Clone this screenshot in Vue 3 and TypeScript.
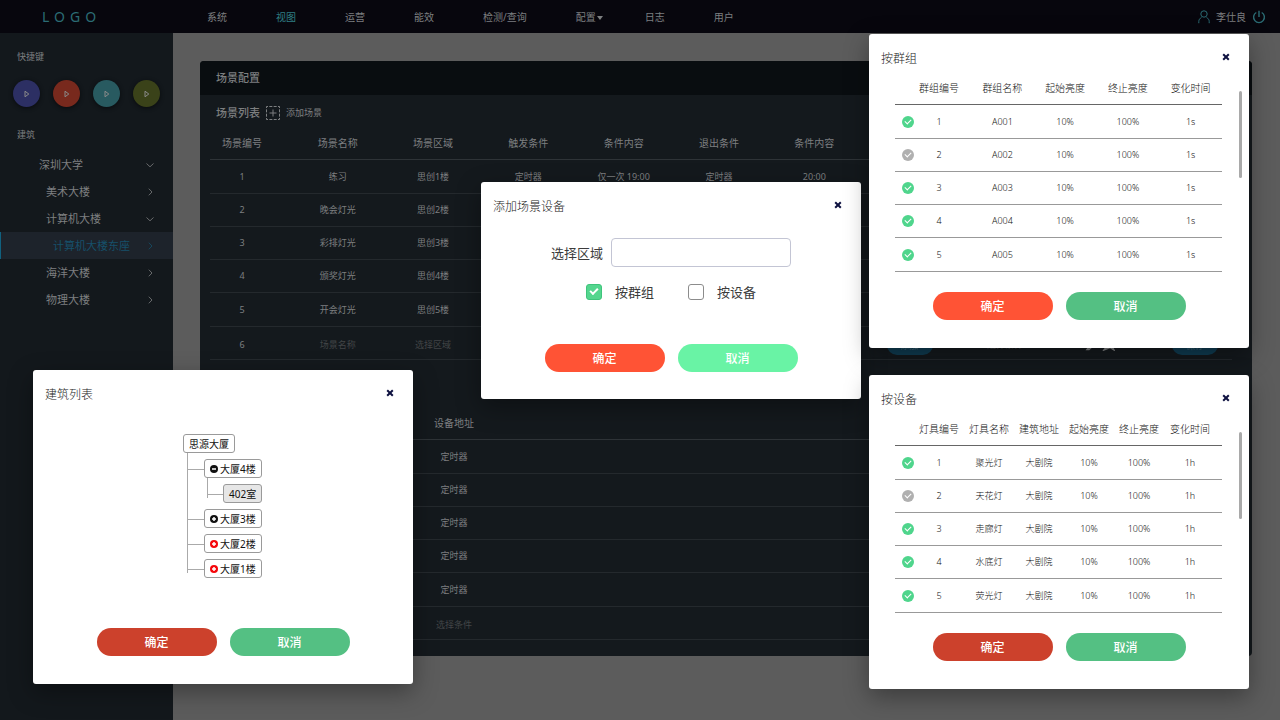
<script setup lang="ts">
import { ref } from 'vue'

interface NavItem { label: string; active?: boolean; menu?: boolean }
interface TreeItem { label: string; level: number; open?: boolean; active?: boolean }
interface CheckRow { on: boolean; cells: string[] }

const nav: NavItem[] = [
  { label: '系统' },
  { label: '视图', active: true },
  { label: '运营' },
  { label: '能效' },
  { label: '检测/查询' },
  { label: '配置', menu: true },
  { label: '日志' },
  { label: '用户' },
]

const shortcuts = ['violet', 'red', 'teal', 'olive']

const buildings: TreeItem[] = [
  { label: '深圳大学', level: 0, open: true },
  { label: '美术大楼', level: 1 },
  { label: '计算机大楼', level: 1, open: true },
  { label: '计算机大楼东座', level: 2, active: true },
  { label: '海洋大楼', level: 1 },
  { label: '物理大楼', level: 1 },
]

const sceneHead = ['场景编号', '场景名称', '场景区域', '触发条件', '条件内容', '退出条件', '条件内容']
const scenes: string[][] = [
  ['1', '练习', '思创1楼', '定时器', '仅一次 19:00', '定时器', '20:00'],
  ['2', '晚会灯光', '思创2楼', '', '', '', ''],
  ['3', '彩排灯光', '思创3楼', '', '', '', ''],
  ['4', '颁奖灯光', '思创4楼', '', '', '', ''],
  ['5', '开会灯光', '思创5楼', '', '', '', ''],
]

const devices = ['定时器', '定时器', '定时器', '定时器', '定时器']

const groupHead = ['群组编号', '群组名称', '起始亮度', '终止亮度', '变化时间']
const groups = ref<CheckRow[]>([
  { on: true, cells: ['1', 'A001', '10%', '100%', '1s'] },
  { on: false, cells: ['2', 'A002', '10%', '100%', '1s'] },
  { on: true, cells: ['3', 'A003', '10%', '100%', '1s'] },
  { on: true, cells: ['4', 'A004', '10%', '100%', '1s'] },
  { on: true, cells: ['5', 'A005', '10%', '100%', '1s'] },
])

const lampHead = ['灯具编号', '灯具名称', '建筑地址', '起始亮度', '终止亮度', '变化时间']
const lamps = ref<CheckRow[]>([
  { on: true, cells: ['1', '聚光灯', '大剧院', '10%', '100%', '1h'] },
  { on: false, cells: ['2', '天花灯', '大剧院', '10%', '100%', '1h'] },
  { on: true, cells: ['3', '走廊灯', '大剧院', '10%', '100%', '1h'] },
  { on: true, cells: ['4', '水底灯', '大剧院', '10%', '100%', '1h'] },
  { on: true, cells: ['5', '荧光灯', '大剧院', '10%', '100%', '1h'] },
])

const area = ref('')
const byGroup = ref(true)
const byDevice = ref(false)
</script>

<template>
  <div class="app">
    <header class="topbar">
      <a class="logo" href="#">LOGO</a>
      <nav class="nav">
        <a v-for="n in nav" :key="n.label" href="#" :class="{ active: n.active }">
          {{ n.label }}<svg v-if="n.menu" class="caret" viewBox="0 0 6 4" width="6" height="4"><path d="M0 0h6L3 4z" fill="currentColor" /></svg>
        </a>
      </nav>
      <div class="user">
        <svg class="teal-ico" viewBox="0 0 12 14" width="12" height="14" fill="none" stroke="currentColor">
          <circle cx="6" cy="4" r="3.2" />
          <path d="M.8 13.2V11.500c0-1.800.9-3 2.700-4.100M11.200 13.200v-1.700c0-1.800-.9-3-2.700-4.100" />
        </svg>
        <span>李仕良</span>
        <button class="plain teal-ico" type="button" aria-label="退出">
          <svg viewBox="0 0 14 14" width="14" height="14" fill="none" stroke="currentColor" stroke-width="1.400">
            <path d="M7 .8v6.200M4.300 2.500a5.400 5.400 0 1 0 5.400 0" />
          </svg>
        </button>
      </div>
    </header>

    <div class="body">
      <aside class="side">
        <h2 class="side-title">快捷键</h2>
        <div class="shortcuts">
          <button v-for="s in shortcuts" :key="s" type="button" :class="['round', s]" aria-label="执行">
            <svg viewBox="0 0 6 8" width="6" height="8" fill="none" stroke="currentColor"><path d="M1 1.200 4.800 4 1 6.800z" /></svg>
          </button>
        </div>
        <h2 class="side-title second">建筑</h2>
        <ul class="menu">
          <li v-for="b in buildings" :key="b.label">
            <a href="#" :class="['lv' + b.level, { active: b.active }]">
              <span>{{ b.label }}</span>
              <svg viewBox="0 0 8 8" width="8" height="8" fill="none" stroke="currentColor" stroke-width=".8">
                <path v-if="b.open" d="M.5 2.500 4 5.800 7.500 2.500" />
                <path v-else d="M2.800.7 6 4 2.800 7.300" />
              </svg>
            </a>
          </li>
        </ul>
      </aside>

      <main class="main">
        <section class="card">
          <h1 class="card-title">场景配置</h1>
          <div class="card-body">
            <div class="sub">
              <h2>场景列表</h2>
              <button class="plain add" type="button">
                <svg viewBox="0 0 14 14" width="14" height="14" fill="none" stroke="currentColor">
                  <rect x=".5" y=".5" width="13" height="13" stroke-dasharray="3 1.330" stroke-dashoffset="1.500" />
                  <path d="M7 3.500v7M3.500 7h7" />
                </svg>
                <span>添加场景</span>
              </button>
            </div>
            <table class="grid scenes">
              <colgroup>
                <col class="first" /><col v-for="i in 9" :key="i" /><col class="last" />
              </colgroup>
              <thead>
                <tr>
                  <th v-for="(h, i) in sceneHead" :key="i">{{ h }}</th>
                  <th></th><th></th><th></th><th></th>
                </tr>
              </thead>
              <tbody>
                <tr v-for="s in scenes" :key="s[0]">
                  <td v-for="(c, i) in s" :key="i">{{ c }}</td>
                  <td></td><td></td><td></td><td></td>
                </tr>
                <tr>
                  <td>6</td>
                  <td class="dim">场景名称</td>
                  <td class="dim">选择区域</td>
                  <td></td><td></td><td></td><td></td>
                  <td><button class="pill" type="button">添加</button></td>
                  <td class="dim">选择条件</td>
                  <td>
                    <svg class="tools" viewBox="0 0 30 12" width="30" height="12" fill="none" stroke="currentColor" stroke-width="1.400">
                      <path d="M2 10.500 9 2l2 2-7 6.500zM19 11l3-4-3-3.500h4L25 1l2 2.500h2L27 7l2 4-4-2.500z" />
                    </svg>
                  </td>
                  <td><button class="pill" type="button">保存</button></td>
                </tr>
              </tbody>
            </table>
            <table class="grid devices">
              <colgroup><col class="lead" /><col class="addr" /><col /></colgroup>
              <thead><tr><td></td><th>设备地址</th><td></td></tr></thead>
              <tbody>
                <tr v-for="(d, i) in devices" :key="i"><td></td><td>{{ d }}</td><td></td></tr>
                <tr><td></td><td class="dim">选择条件</td><td></td></tr>
              </tbody>
            </table>
          </div>
        </section>
      </main>
    </div>

    <section class="dialog d-list" role="dialog" aria-label="建筑列表">
      <header>
        <h2>建筑列表</h2>
        <button class="plain close" type="button" aria-label="关闭"><svg viewBox="0 0 8 8" width="8" height="8"><path d="M1.200 1.200l5.600 5.600M6.800 1.200 1.200 6.800" /></svg></button>
      </header>
      <div class="tree">
        <button class="node" type="button">思源大厦</button>
        <ul class="kids">
          <li>
            <button class="node" type="button">
              <svg viewBox="0 0 8 8" width="8" height="8"><circle cx="4" cy="4" r="4" /><path d="M2 4h4" class="mark" /></svg>大厦4楼
            </button>
            <ul class="kids inner">
              <li><button class="node chosen" type="button">402室</button></li>
            </ul>
          </li>
          <li><button class="node" type="button"><svg viewBox="0 0 8 8" width="8" height="8"><circle cx="4" cy="4" r="4" /><path d="M2 4h4M4 2v4" class="mark" /></svg>大厦3楼</button></li>
          <li><button class="node warn" type="button"><svg viewBox="0 0 8 8" width="8" height="8"><circle cx="4" cy="4" r="4" /><path d="M2 4h4M4 2v4" class="mark" /></svg>大厦2楼</button></li>
          <li><button class="node warn" type="button"><svg viewBox="0 0 8 8" width="8" height="8"><circle cx="4" cy="4" r="4" /><path d="M2 4h4M4 2v4" class="mark" /></svg>大厦1楼</button></li>
        </ul>
      </div>
      <footer>
        <button class="btn ok dark" type="button">确定</button>
        <button class="btn no" type="button">取消</button>
      </footer>
    </section>

    <section class="dialog d-add" role="dialog" aria-label="添加场景设备">
      <header>
        <h2>添加场景设备</h2>
        <button class="plain close" type="button" aria-label="关闭"><svg viewBox="0 0 8 8" width="8" height="8"><path d="M1.200 1.200l5.600 5.600M6.800 1.200 1.200 6.800" /></svg></button>
      </header>
      <div class="form">
        <div class="field">
          <label for="area">选择区域</label>
          <input id="area" v-model="area" type="text" />
        </div>
        <div class="choices">
          <label><input v-model="byGroup" class="box" type="checkbox" />按群组</label>
          <label><input v-model="byDevice" class="box" type="checkbox" />按设备</label>
        </div>
      </div>
      <footer>
        <button class="btn ok" type="button">确定</button>
        <button class="btn no light" type="button">取消</button>
      </footer>
    </section>

    <section class="dialog d-group" role="dialog" aria-label="按群组">
      <header>
        <h2>按群组</h2>
        <button class="plain close" type="button" aria-label="关闭"><svg viewBox="0 0 8 8" width="8" height="8"><path d="M1.200 1.200l5.600 5.600M6.800 1.200 1.200 6.800" /></svg></button>
      </header>
      <table class="list five">
        <colgroup><col class="tick" /><col class="num" /><col v-for="i in 4" :key="i" /></colgroup>
        <thead><tr><td></td><th v-for="h in groupHead" :key="h">{{ h }}</th></tr></thead>
        <tbody>
          <tr v-for="g in groups" :key="g.cells[0]">
            <td><input v-model="g.on" class="dot" type="checkbox" :aria-label="g.cells[1]" /></td>
            <td v-for="(c, i) in g.cells" :key="i">{{ c }}</td>
          </tr>
        </tbody>
      </table>
      <i class="thumb"></i>
      <footer>
        <button class="btn ok" type="button">确定</button>
        <button class="btn no" type="button">取消</button>
      </footer>
    </section>

    <section class="dialog d-lamp" role="dialog" aria-label="按设备">
      <header>
        <h2>按设备</h2>
        <button class="plain close" type="button" aria-label="关闭"><svg viewBox="0 0 8 8" width="8" height="8"><path d="M1.200 1.200l5.600 5.600M6.800 1.200 1.200 6.800" /></svg></button>
      </header>
      <table class="list six">
        <colgroup><col class="tick" /><col class="num" /><col v-for="i in 4" :key="i" class="mid" /><col /></colgroup>
        <thead><tr><td></td><th v-for="h in lampHead" :key="h">{{ h }}</th></tr></thead>
        <tbody>
          <tr v-for="l in lamps" :key="l.cells[0]">
            <td><input v-model="l.on" class="dot" type="checkbox" :aria-label="l.cells[1]" /></td>
            <td v-for="(c, i) in l.cells" :key="i">{{ c }}</td>
          </tr>
        </tbody>
      </table>
      <i class="thumb"></i>
      <footer>
        <button class="btn ok dark" type="button">确定</button>
        <button class="btn no" type="button">取消</button>
      </footer>
    </section>
  </div>
</template>

<style>
body {
  margin: 0;
  background: #5c5c5c;
}
</style>

<style scoped>
.app,
.app button,
.app input {
  font-family: "Noto Sans", "Noto Sans CJK SC", sans-serif;
}
.app {
  position: relative;
  display: flex;
  flex-direction: column;
  min-height: 100vh;
  overflow: hidden;
  font-size: 9px;
  line-height: 14px;
  color: #7d7f80;
}
.app *,
.app *::before,
.app *::after {
  box-sizing: border-box;
}
h1,
h2,
ul {
  margin: 0;
  padding: 0;
  list-style: none;
  font-weight: 400;
}
a {
  color: inherit;
  text-decoration: none;
}
svg {
  display: block;
  flex: none;
}
.plain {
  display: flex;
  align-items: center;
  padding: 0;
  border: 0;
  background: none;
  color: inherit;
  font-size: 9px;
  line-height: 14px;
}

.topbar {
  display: flex;
  align-items: center;
  height: 33px;
  padding-right: 14px;
  background: #07060d;
}
.logo {
  width: 165px;
  margin-left: 42px;
  font-size: 14px;
  letter-spacing: 5px;
  color: #2b6c74;
}
.nav {
  display: flex;
  gap: 49px;
  font-size: 10px;
}
.nav a {
  position: relative;
}
.nav .active {
  color: #2f7f83;
}
.caret {
  position: absolute;
  top: 6px;
  right: -7px;
}
.user {
  display: flex;
  align-items: center;
  gap: 6px;
  margin-left: auto;
}
.user span {
  font-size: 10px;
}
.user .teal-ico {
  color: #2b6c74;
}

.body {
  display: flex;
  flex: 1;
}
.side {
  width: 173px;
  padding-top: 17px;
  background: #13181c;
}
.side-title {
  padding-left: 17px;
  font-size: 9px;
}
.second {
  margin-top: 21px;
}
.shortcuts {
  display: flex;
  gap: 13px;
  padding: 16px 0 0 13px;
}
.round {
  display: grid;
  place-items: center;
  width: 27px;
  height: 27px;
  padding: 0;
  border: 0;
  border-radius: 50%;
  color: #8a8a8a;
  box-shadow: 0 1px 4px #090b0e;
}
.violet { background: #2c2f63; }
.red { background: #78291d; }
.teal { background: #285a60; }
.olive { background: #3a4219; }
.menu {
  margin-top: 9px;
  font-size: 11px;
}
.menu a {
  display: flex;
  align-items: center;
  justify-content: space-between;
  height: 27px;
  padding-right: 19px;
  border-left: 1px solid transparent;
}
.menu .lv0 { padding-left: 38px; }
.menu .lv1 { padding-left: 45px; }
.menu .lv2 { padding-left: 52px; }
.menu .active {
  border-left-color: #10617f;
  background: #1d232b;
  color: #16506a;
}

.main {
  flex: 1;
  padding: 28px 28px 64px 27px;
  background: #5c5c5c;
}
.card {
  border-radius: 4px;
  background: #14191d;
  overflow: hidden;
}
.card-title {
  height: 34px;
  padding-left: 16px;
  background: #090d10;
  font-size: 11px;
  font-weight: 500;
  line-height: 33px;
}
.card-body {
  padding: 0 20px 16px 10px;
}
.sub {
  display: flex;
  align-items: center;
  gap: 6px;
  height: 31px;
  padding: 5px 0 0 6px;
}
.sub h2 {
  font-size: 11px;
  font-weight: 500;
}
.add {
  gap: 6px;
}
table {
  border-collapse: separate;
  border-spacing: 0;
  table-layout: fixed;
}
th,
td {
  padding: 0;
  font-weight: 400;
  text-align: center;
  vertical-align: middle;
  white-space: nowrap;
}
th {
  font-size: 10px;
}
.grid {
  width: 100%;
}
.grid thead tr {
  height: 34px;
}
.grid tbody tr {
  height: 33px;
}
.grid tbody tr:nth-child(4n + 1) {
  height: 34px;
}
.grid th,
.grid td {
  border-bottom: 1px solid #24292d;
}
.grid thead th,
.grid thead td {
  border-bottom-color: #2e3337;
}
.grid tbody tr:last-child td {
  padding-top: 4px;
}
.first { width: 80px; }
.last { width: 84px; }
.scenes th:first-child,
.scenes td:first-child {
  padding-right: 16px;
}
.scenes td:last-child {
  padding-left: 10px;
}
.devices {
  margin-top: 46px;
}
.lead { width: 191px; }
.addr { width: 106px; }
.grid .dim {
  color: #424547;
}
.pill {
  width: 46px;
  height: 20px;
  padding: 0;
  border: 0;
  border-radius: 10px;
  background: #0f3c52;
  color: #3f6474;
  font-size: 9px;
}
.tools {
  margin: 0 auto;
}

.dialog {
  position: absolute;
  display: flex;
  flex-direction: column;
  width: 380px;
  border-radius: 3px;
  background: #fff;
  color: #222;
  box-shadow: 0 8px 24px rgba(0, 0, 0, 0.35);
}
.d-list { left: 33px; top: 370px; }
.d-add { left: 481px; top: 182px; }
.d-group { right: 31px; top: 34px; }
.d-lamp { right: 31px; top: 375px; }
.dialog header {
  display: flex;
  align-items: flex-start;
  justify-content: space-between;
  height: 38px;
  padding: 16px 19px 0 12px;
}
.dialog h2 {
  font-size: 12px;
  font-weight: 300;
  line-height: 18px;
}
.close {
  height: 14px;
}
.close path {
  stroke: #0e1140;
  stroke-width: 2;
}
.dialog footer {
  display: flex;
  justify-content: center;
  gap: 13px;
  padding: 20px 0 28px;
}
.btn {
  width: 120px;
  height: 28px;
  padding: 0;
  border: 0;
  border-radius: 14px;
  color: #fff;
  font-size: 12px;
  font-weight: 500;
}
.ok { background: #ff5335; }
.ok.dark { background: #cc412c; }
.no { background: #54c083; }
.no.light { background: #69f3a5; }

.list {
  width: 327px;
  margin: 0 auto 0 26px;
}
.list thead tr {
  height: 33px;
}
.list tbody tr {
  height: 33px;
}
.list tbody tr:nth-child(4n + 1) {
  height: 34px;
}
.list th,
.list td {
  border-bottom: 1px solid #999;
  color: #111;
  font-weight: 300;
}
.list thead th,
.list thead td {
  border-bottom-color: #666;
}
.tick { width: 24px; }
.five .num { width: 52px; }
.six .num { width: 45px; }
.six .mid { width: 50px; }
.five th:nth-child(2),
.five td:nth-child(2) {
  padding-right: 12px;
}
.six th:nth-child(2),
.six td:nth-child(2) {
  padding-right: 5px;
}
.six th:last-child,
.six td:last-child {
  padding-right: 6px;
}
.dot {
  position: relative;
  display: block;
  width: 12px;
  height: 12px;
  margin: 0 0 0 7px;
  appearance: none;
  border-radius: 50%;
  background: #b0b0b0;
}
.dot:checked {
  background: #4fd58c;
}
.dot::after {
  content: "";
  position: absolute;
  left: 3px;
  top: 3px;
  width: 6px;
  height: 4px;
  border: solid #fff;
  border-width: 0 0 1px 1px;
  transform: rotate(-45deg);
}
.thumb {
  position: absolute;
  right: 7px;
  top: 57px;
  width: 3px;
  height: 87px;
  border-radius: 2px;
  background: #a9a9a9;
}

.form {
  display: flex;
  flex-direction: column;
  align-items: center;
  gap: 17px;
  padding: 18px 0 24px;
  color: #3c3c3c;
  font-size: 13px;
}
.d-add footer {
  padding-bottom: 27px;
}
.field {
  display: flex;
  align-items: center;
  gap: 8px;
}
.field input {
  width: 180px;
  height: 29px;
  padding: 0 8px;
  border: 1px solid #c3c5d4;
  border-radius: 4px;
  outline: 0;
  font-size: 13px;
}
.choices {
  display: flex;
  gap: 34px;
}
.choices label {
  display: flex;
  align-items: center;
  gap: 13px;
  height: 16px;
}
.box {
  position: relative;
  width: 16px;
  height: 16px;
  margin: 0;
  appearance: none;
  border: 1px solid #8c8c8c;
  border-radius: 3px;
}
.box:checked {
  border-color: #3fc47c;
  background: #54d68e;
}
.box:checked::after {
  content: "";
  position: absolute;
  left: 3px;
  top: 3px;
  width: 8px;
  height: 5px;
  border: solid #fff;
  border-width: 0 0 2px 2px;
  transform: rotate(-45deg);
}

.tree {
  padding: 26px 0 30px 150px;
}
.node {
  position: relative;
  display: flex;
  align-items: center;
  gap: 2px;
  height: 19px;
  padding: 0 5px;
  border: 1px solid #9a9a9a;
  border-radius: 3px;
  background: #fff;
  color: #111;
  font-size: 10px;
}
.node svg {
  fill: #111;
}
.node .mark {
  stroke: #fff;
  stroke-width: 1.500;
}
.node.warn svg {
  fill: #f5080c;
}
.chosen {
  background: #e6e6e6;
}
.kids {
  position: relative;
  display: flex;
  flex-direction: column;
  gap: 6px;
  padding: 6px 0 0 21px;
}
.kids::before {
  content: "";
  position: absolute;
  left: 4px;
  top: 0;
  bottom: 5px;
  width: 1px;
  background: #aaa;
}
.kids li {
  position: relative;
}
.kids li::before {
  content: "";
  position: absolute;
  left: -17px;
  top: 10px;
  width: 17px;
  height: 1px;
  background: #aaa;
}
.inner {
  padding-left: 19px;
}
.inner::before {
  left: 3px;
}
.inner li::before {
  left: -16px;
  width: 16px;
}
</style>
